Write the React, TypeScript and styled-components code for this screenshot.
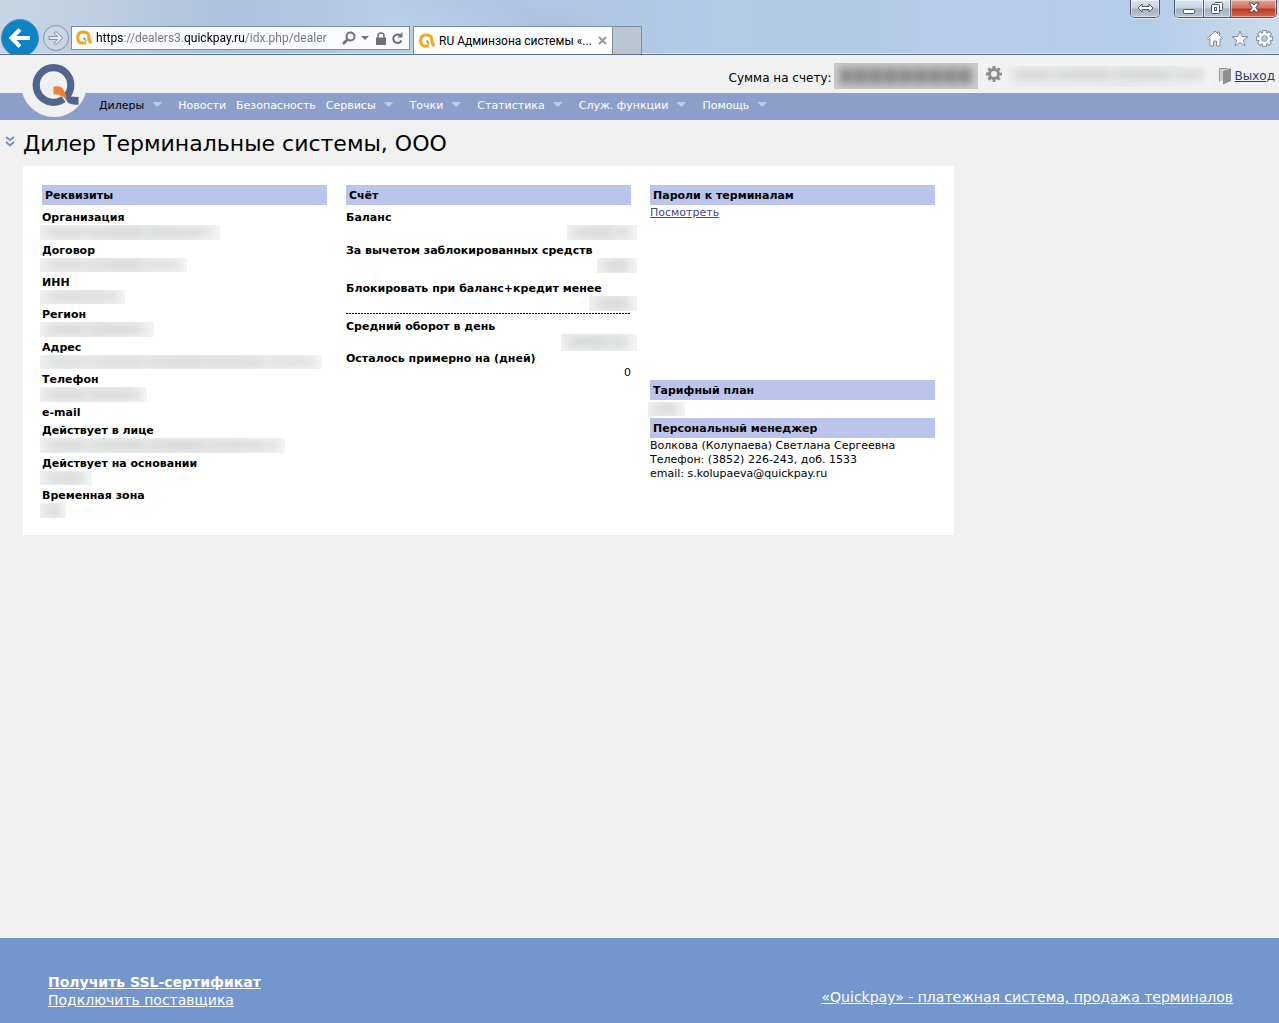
import React, { useState } from "react";
import styled, { createGlobalStyle } from "styled-components";

const ui = `Roboto, "Open Sans", sans-serif`;
const body = `Verdana, "DejaVu Sans", sans-serif`;

const GlobalStyle = createGlobalStyle`
  *, *::before, *::after { box-sizing: border-box; }
  body { margin: 0; background: #f1f1f1; font-family: ${body}; color: #000; }
  button, input { font: inherit; }
`;

const Page = styled.div`
  min-height: 100vh;
  display: flex;
  flex-direction: column;
`;

/* ---------- browser frame ---------- */

const Chrome = styled.header`
  display: flex;
  align-items: flex-end;
  height: 55px;
  flex: none;
  overflow: hidden;
  border-bottom: 1px solid #5c7088;
  box-shadow: inset 0 -1px 0 #d9e5f1;
  font-family: ${ui};
  background:
    linear-gradient(205deg, rgba(190, 207, 232, 0) 52%, rgba(165, 187, 220, 0.5) 56%, rgba(190, 207, 232, 0) 66%),
    linear-gradient(90deg, #c6d5e4 0, #bdcee1 8%, #abc1dc 18%, #b9cfe7 31%, #b7cfe9 38%, #afc5e1 44%, #b1cce6 56%, #b2cbe5 68%, #b7cce9 74%, #b4cde9 90%, #cbdcec 100%);
`;

const NavButtons = styled.div`
  display: flex;
  align-items: center;
  gap: 4px;
  height: 32px;
  margin-left: 1px;
`;

const RoundButton = styled.button<{ $size: number; $main?: boolean }>`
  display: grid;
  place-items: center;
  flex: none;
  width: ${(p) => p.$size}px;
  height: ${(p) => p.$size}px;
  padding: 0;
  border-radius: 50%;
  border: ${(p) => (p.$main ? "1px solid #5f87a8" : "1px solid #8296ad")};
  background: ${(p) => (p.$main ? "#0a84c6" : "rgba(255, 255, 255, 0.12)")};
`;

const AddressBar = styled.form`
  display: flex;
  align-items: center;
  width: 339px;
  height: 24px;
  margin: 0 3px 4px 2px;
  padding: 0 4px;
  border: 1px solid #7a8ea5;
  background: #f9fbfe;
`;

/* The scheme and the domain are dark, the rest of the address is grey. */
const AddressInput = styled.input`
  flex: 1;
  min-width: 0;
  margin-left: 4px;
  padding: 0;
  border: 0;
  outline: 0;
  font-size: 12px;
  line-height: 20px;
  color: transparent;
  caret-color: #000;
  background: linear-gradient(90deg, #000 0 28px, #757575 28px 88px, #000 88px 148px, #757575 148px);
  -webkit-background-clip: text;
  background-clip: text;
`;

const ToolButton = styled.button<{ $width: number }>`
  display: grid;
  place-items: center;
  flex: none;
  width: ${(p) => p.$width}px;
  height: 20px;
  padding: 0;
  border: 0;
  background: none;
`;

const Tab = styled.div`
  display: flex;
  align-items: center;
  width: 200px;
  height: 28px;
  padding: 0 4px 0 5px;
  border: 1px solid #7a8ea5;
  border-bottom: 0;
  background: #fff;
  font-size: 12px;
`;

const TabTitle = styled.span`
  flex: 1;
  margin-left: 4px;
  white-space: nowrap;
  overflow: hidden;
`;

const NewTab = styled.button`
  width: 30px;
  height: 28px;
  margin-left: -1px;
  padding: 0;
  border: 1px solid #7a8ea5;
  border-bottom: 0;
  background: #bac5d0;
`;

const WindowSide = styled.div`
  display: flex;
  flex-direction: column;
  align-items: flex-end;
  justify-content: space-between;
  align-self: stretch;
  margin-left: auto;
  padding: 0 2px 6px 0;
`;

const WindowRow = styled.div`
  display: flex;
  gap: 14px;
`;

const WindowGroup = styled.div`
  display: flex;
  height: 18px;
  border: 1px solid #4b5766;
  border-top: 0;
  border-radius: 0 0 5px 5px;
  overflow: hidden;
  box-shadow: 0 1px 0 rgba(255, 255, 255, 0.6);
`;

const WindowButton = styled.button<{ $width: number; $close?: boolean }>`
  display: grid;
  place-items: center;
  width: ${(p) => p.$width}px;
  padding: 0 0 2px;
  border: 0;
  box-shadow: inset 0 0 0 1px rgba(255, 255, 255, 0.45);
  background: ${(p) =>
    p.$close
      ? "linear-gradient(#e0a497 0, #d0705c 48%, #b93a20 52%, #d3694a 100%)"
      : "linear-gradient(#dbe5ef 0, #c5d1de 48%, #a3b1c2 52%, #b8c8d9 100%)"};
  & + & { border-left: 1px solid #5b6776; }
`;

const CommandRow = styled.div`
  display: flex;
  gap: 4px;
  padding-right: 3px;
`;

/* ---------- site header ---------- */

const SiteHeader = styled.div`
  position: relative;
`;

const LogoLink = styled.a`
  position: absolute;
  left: 20px;
  top: 0;
  svg { display: block; }
`;

const AccountBar = styled.div`
  display: flex;
  align-items: center;
  justify-content: flex-end;
  height: 38px;
  padding: 4px 4px 0 0;
`;

const AccountLabel = styled.span`
  margin: 4px 2px 0 0;
  font-size: 12px;
`;

const IconButton = styled.button`
  display: grid;
  place-items: center;
  width: 18px;
  height: 18px;
  margin: 0 4px 4px 7px;
  padding: 0;
  border: 0;
  background: none;
`;

const ExitLink = styled.a`
  display: flex;
  align-items: center;
  gap: 3px;
  margin-left: 8px;
  color: #2f3f74;
  font-size: 12px;
`;

const Menu = styled.nav`
  display: flex;
  align-items: center;
  gap: 10px;
  height: 27px;
  padding: 0 8px 2px 99px;
  background: #8c9fcb;
  font-size: 11px;
`;

const MenuLink = styled.a<{ $active?: boolean }>`
  display: flex;
  align-items: center;
  gap: 8px;
  color: ${(p) => (p.$active ? "#000" : "#fff")};
  text-decoration: none;
  white-space: nowrap;
`;

const Arrow = styled.span`
  width: 10px;
  height: 5px;
  margin: 0 6px 2px 0;
  background: #bfcbe6;
  clip-path: polygon(0 0, 100% 0, 50% 100%);
`;

/* ---------- dealer card ---------- */

const Main = styled.main`
  flex: 1;
  padding: 9px 23px 24px 5px;
`;

const TitleRow = styled.div`
  display: flex;
  align-items: center;
  gap: 8px;
  height: 30px;
`;

const FoldButton = styled.button`
  display: grid;
  width: 10px;
  height: 16px;
  margin-bottom: 4px;
  padding: 0;
  border: 0;
  background: none;
  place-items: center;
`;

const Title = styled.h1`
  margin: 0;
  font-size: 22px;
  line-height: 30px;
  font-weight: 400;
  white-space: nowrap;
`;

const Card = styled.section`
  display: grid;
  grid-template-columns: repeat(3, minmax(0, 1fr));
  gap: 19px;
  max-width: 931px;
  margin: 7px 0 0 18px;
  padding: 19px 19px 14px;
  background: #fff;
  font-size: 11px;
  line-height: 14px;
`;

const Heading = styled.h2`
  margin: 0;
  padding: 2px 3px 0;
  height: 20px;
  background: #bbc5ec;
  font-size: 11px;
  line-height: 18px;
`;

const Fields = styled.dl`
  margin: 5px 0 0;
`;

const Term = styled.dt`
  font-weight: 700;
  line-height: 15px;
  white-space: nowrap;
`;

const Value = styled.dd<{ $height: number; $end?: boolean; $after?: number }>`
  display: flex;
  justify-content: ${(p) => (p.$end ? "flex-end" : "flex-start")};
  height: ${(p) => p.$height}px;
  margin: 0 ${(p) => (p.$end ? -6 : 0)}px ${(p) => p.$after ?? 3}px ${(p) => (p.$end ? 0 : -2)}px;
`;

const Total = styled.dd`
  margin: 0;
  text-align: right;
`;

const Rule = styled.hr`
  margin: 0 0 5px;
  border: 0;
  height: 1px;
  background: repeating-linear-gradient(90deg, #000 0 2px, transparent 2px 3px);
`;

const Terminals = styled.div`
  min-height: 195px;
`;

const CardText = styled.p`
  margin: 0;
  padding-top: 1px;
`;

const CardLink = styled.a`
  color: #44488c;
`;

const Plan = styled.div`
  height: 18px;
  padding-top: 2px;
  margin-left: -2px;
`;

/* Hidden private value: a clipped plate with a smeared stripe inside. */
const Redacted = styled.span<{ $width: number; $height: number; $strong?: boolean }>`
  display: block;
  flex: none;
  width: ${(p) => p.$width}px;
  height: ${(p) => p.$height}px;
  overflow: hidden;
  background: ${(p) => (p.$strong ? "#cbcccc" : "linear-gradient(90deg, #eeefef, #e8e9e9 60%, #f3f4f4)")};
  &::before {
    content: "";
    display: block;
    height: ${(p) => (p.$strong ? 60 : 46)}%;
    margin: ${(p) => (p.$strong ? "5px 6px" : "4px 8px")};
    background: ${(p) =>
      p.$strong
        ? "repeating-linear-gradient(90deg, #858585 0 11px, #a8a8a8 11px 15px)"
        : "repeating-linear-gradient(90deg, #d3d5d5 0 34px, #dfe1e1 34px 42px, #d6d8d8 42px 60px)"};
    filter: blur(4px);
  }
`;

/* ---------- footer ---------- */

const Footer = styled.footer`
  display: flex;
  flex-wrap: wrap;
  justify-content: space-between;
  align-items: flex-end;
  gap: 12px;
  min-height: 85px;
  padding: 35px 46px 14px 48px;
  background: #7496ce;
  font-size: 14px;
  line-height: 18px;
`;

const FooterLinks = styled.div`
  display: flex;
  flex-direction: column;
  align-items: flex-start;
`;

const FooterLink = styled.a<{ $bold?: boolean }>`
  color: #fff;
  font-weight: ${(p) => (p.$bold ? 700 : 400)};
`;

const Promo = styled.div`
  padding-bottom: 3px;
`;

/* ---------- drawings ---------- */

const QIcon = () => (
  <svg width="16" height="16" viewBox="0 0 16 16" aria-hidden="true">
    <path d="M10 13H5.200Q1.700 12.300 1.700 7.200T7.300 1.900 12.800 7.200q0 4 2.700 5.600" fill="none" stroke="#f2a71b" strokeWidth="3" />
    <path d="M7 7.500h2l2 4q-3.500-.5-4-4z" fill="#8fb052" />
  </svg>
);

type GearProps = { size: number; fill: string; stroke?: string; hole: string };
const GearShape = ({ size, fill, stroke, hole }: GearProps) => {
  const teeth = (width: number, grow: number, color: string) =>
    [0, 45, 90, 135].map((a) => (
      <rect key={a} x={9 - width / 2} y={1 - grow} width={width} height={16 + 2 * grow} fill={color} transform={`rotate(${a} 9 9)`} />
    ));
  return (
    <svg width={size} height={size} viewBox="0 0 18 18" aria-hidden="true">
      {stroke && <g>{teeth(5, 1, stroke)}<circle cx="9" cy="9" r="7" fill={stroke} /></g>}
      {teeth(3, 0, fill)}
      <circle cx="9" cy="9" r="6" fill={fill} />
      <circle cx="9" cy="9" r="3" fill={hole} stroke={stroke} />
    </svg>
  );
};

const Logo = () => (
  <svg width="68" height="63" viewBox="0 5 68 63" aria-hidden="true">
    <circle cx="34" cy="34" r="33" fill="#f1f1f1" />
    <circle cx="33.500" cy="35" r="17.300" fill="none" stroke="#52658f" strokeWidth="7.200" />
    <path d="M45 42l6 4.500 7.500.5v7.500c-7 .8-11-1-14-5z" fill="#52658f" />
    <path d="M41 44l6.500 9.500" stroke="#f1f1f1" strokeWidth="1.500" />
    <path d="M33.500 36.500c9-1.500 11 2 13.500 13.500-3-3-9-7-13.500-5.500z" fill="#f08038" />
  </svg>
);

type Item = { text: string; sub?: boolean; active?: boolean };
const menu: Item[] = [
  { text: "Дилеры", sub: true, active: true },
  { text: "Новости" },
  { text: "Безопасность" },
  { text: "Сервисы", sub: true },
  { text: "Точки", sub: true },
  { text: "Статистика", sub: true },
  { text: "Служ. функции", sub: true },
  { text: "Помощь", sub: true },
];

type Detail = { term: string; width?: number; height?: number };
const details: Detail[] = [
  { term: "Организация", width: 180, height: 15 },
  { term: "Договор", width: 147, height: 14 },
  { term: "ИНН", width: 85, height: 14 },
  { term: "Регион", width: 114, height: 15 },
  { term: "Адрес", width: 282, height: 14 },
  { term: "Телефон", width: 107, height: 15 },
  { term: "e-mail" },
  { term: "Действует в лице", width: 245, height: 15 },
  { term: "Действует на основании", width: 52, height: 14 },
  { term: "Временная зона", width: 26, height: 15 },
];

export default function App() {
  const [url, setUrl] = useState("https://dealers3.quickpay.ru/idx.php/dealer");
  return (
    <Page>
      <GlobalStyle />
      <Chrome>
        <NavButtons>
          <RoundButton $size={38} $main aria-label="Назад">
            <svg width="24" height="22" viewBox="0 0 24 22" fill="none" stroke="#fff" strokeWidth="4">
              <path d="M22 11H4M12 2.500L3.500 11l8.500 8.500" />
            </svg>
          </RoundButton>
          <RoundButton $size={26} aria-label="Вперёд">
            <svg width="18" height="16" viewBox="0 0 18 16" fill="#e3ebf4" stroke="#8092a8">
              <path d="M2 6.500h8.500L7 3l2-1.500L16 8l-7 6.500L7 13l3.500-3.500H2z" />
            </svg>
          </RoundButton>
        </NavButtons>
        <AddressBar onSubmit={(e) => e.preventDefault()}>
          <QIcon />
          <AddressInput aria-label="Адрес" value={url} onChange={(e) => setUrl(e.target.value)} />
          <ToolButton $width={18} type="button" aria-label="Поиск">
            <svg width="14" height="14" viewBox="0 0 14 14" fill="none" stroke="#707070" strokeWidth="2">
              <circle cx="8.500" cy="5.500" r="4" />
              <path d="M5.500 8.500L1 13" strokeWidth="2.500" />
            </svg>
          </ToolButton>
          <ToolButton $width={14} type="button" aria-label="Показать список">
            <svg width="8" height="4" viewBox="0 0 8 4"><path d="M0 0h8L4 4z" fill="#707070" /></svg>
          </ToolButton>
          <ToolButton $width={18} type="button" aria-label="Сведения о безопасности">
            <svg width="12" height="13" viewBox="0 0 12 13">
              <rect x="1" y="5.500" width="10" height="7.500" fill="#707070" />
              <path d="M3 6V4a3 3 0 0 1 6 0v2" fill="none" stroke="#707070" strokeWidth="1.500" />
            </svg>
          </ToolButton>
          <ToolButton $width={15} type="button" aria-label="Обновить">
            <svg width="13" height="13" viewBox="0 0 13 13">
              <path d="M10.500 8.500A4.300 4.300 0 1 1 9.500 3.500" fill="none" stroke="#707070" strokeWidth="2" />
              <path d="M11.500 0v5.500H6.500z" fill="#707070" />
            </svg>
          </ToolButton>
        </AddressBar>
        <Tab>
          <QIcon />
          <TabTitle>RU Админзона системы «...</TabTitle>
          <ToolButton $width={12} aria-label="Закрыть вкладку">
            <svg width="9" height="9" viewBox="0 0 9 9" stroke="#9a9a9a" strokeWidth="2"><path d="M1 1l7 7M8 1L1 8" /></svg>
          </ToolButton>
        </Tab>
        <NewTab aria-label="Новая вкладка" />
        <WindowSide>
          <WindowRow>
            <WindowGroup>
              <WindowButton $width={28} aria-label="Изменить размер">
                <svg width="17" height="10" viewBox="0 0 17 10" fill="#fff" stroke="#4b5766">
                  <path d="M1 5l4-4v2.500h7V1l4 4-4 4V6.500H5V9z" />
                </svg>
              </WindowButton>
            </WindowGroup>
            <WindowGroup>
              <WindowButton $width={28} aria-label="Свернуть">
                <svg width="12" height="14" viewBox="0 0 12 14"><rect x=".5" y="8.500" width="11" height="4" rx="1" fill="#fff" stroke="#4b5766" /></svg>
              </WindowButton>
              <WindowButton $width={27} aria-label="Восстановить">
                <svg width="13" height="12" viewBox="0 0 13 12" fill="#fff" stroke="#4b5766">
                  <rect x="3.500" y=".5" width="8" height="8" rx="1" />
                  <rect x=".5" y="2.500" width="8" height="9" rx="1" />
                  <rect x="3.500" y="5.500" width="2" height="3" />
                </svg>
              </WindowButton>
              <WindowButton $width={46} $close aria-label="Закрыть">
                <svg width="12" height="11" viewBox="0 0 12 11" fill="#fff" stroke="#55404a">
                  <path d="M1 1h3.500L6 3l1.500-2H11L8 5.500l3 4.500H7.500L6 8l-1.500 2H1l3-4.500z" />
                </svg>
              </WindowButton>
            </WindowGroup>
          </WindowRow>
          <CommandRow>
            <ToolButton $width={20} aria-label="Домой">
              <svg width="18" height="17" viewBox="0 0 18 17" fill="#fff" stroke="#7d8fa6">
                <path d="M9 1L1.500 8.500l1 1L4 8.500V16h3.500v-5h3v5H14V8.500l1.500 1 1-1L13.500 5.500V2h-2v1.500z" />
              </svg>
            </ToolButton>
            <ToolButton $width={21} aria-label="Избранное">
              <svg width="18" height="17" viewBox="0 0 18 17" fill="#fff" stroke="#7d8fa6">
                <path d="M9 1l2 5.500h6l-4.700 3.600L14 16l-5-3.500L4 16l1.700-5.900L1 6.500h6z" />
              </svg>
            </ToolButton>
            <ToolButton $width={20} aria-label="Сервис">
              <GearShape size={17} fill="#fff" stroke="#7d8fa6" hole="#b9cfe6" />
            </ToolButton>
          </CommandRow>
        </WindowSide>
      </Chrome>

      <SiteHeader>
        <AccountBar>
          <AccountLabel>Сумма на счету:</AccountLabel>
          <Redacted $width={144} $height={26} $strong />
          <IconButton aria-label="Настройки">
            <GearShape size={18} fill="#8f8f8f" hole="#f1f1f1" />
          </IconButton>
          <Redacted $width={204} $height={21} />
          <ExitLink href="#exit">
            <svg width="13" height="18" viewBox="0 0 13 18" aria-hidden="true">
              <path d="M.5 14.500v-13h8" fill="none" stroke="#999" />
              <path d="M1 2h8L4 4v10H1z" fill="#d0d0d0" />
              <path d="M4 4l8-3v13l-8 3.500z" fill="#8f8f8f" />
            </svg>
            Выход
          </ExitLink>
        </AccountBar>
        <Menu>
          {menu.map((m) => (
            <MenuLink key={m.text} href="#menu" $active={m.active}>
              {m.text}
              {m.sub && <Arrow />}
            </MenuLink>
          ))}
        </Menu>
        <LogoLink href="#home" aria-label="Quickpay"><Logo /></LogoLink>
      </SiteHeader>

      <Main>
        <TitleRow>
          <FoldButton aria-label="Развернуть">
            <svg width="10" height="12" viewBox="0 0 10 12" fill="none" stroke="#7391c4" strokeWidth="2">
              <path d="M1 1l4 3 4-3M1 6l4 3.500L9 6" />
            </svg>
          </FoldButton>
          <Title>Дилер Терминальные системы, ООО</Title>
        </TitleRow>
        <Card>
          <div>
            <Heading>Реквизиты</Heading>
            <Fields>
              {details.map((d) => (
                <React.Fragment key={d.term}>
                  <Term>{d.term}</Term>
                  <Value $height={d.height ?? 0}>
                    {d.width && <Redacted $width={d.width} $height={d.height ?? 15} />}
                  </Value>
                </React.Fragment>
              ))}
            </Fields>
          </div>
          <div>
            <Heading>Счёт</Heading>
            <Fields>
              <Term>Баланс</Term>
              <Value $height={15} $end><Redacted $width={70} $height={15} /></Value>
              <Term>За вычетом заблокированных средств</Term>
              <Value $height={15} $end $after={8}><Redacted $width={40} $height={15} /></Value>
              <Term>Блокировать при баланс+кредит менее</Term>
              <Value $height={15} $end $after={2}><Redacted $width={48} $height={15} /></Value>
            </Fields>
            <Rule />
            <Fields>
              <Term>Средний оборот в день</Term>
              <Value $height={15} $end $after={2}><Redacted $width={76} $height={17} /></Value>
              <Term>Осталось примерно на (дней)</Term>
              <Total>0</Total>
            </Fields>
          </div>
          <div>
            <Terminals>
              <Heading>Пароли к терминалам</Heading>
              <CardText><CardLink href="#passwords">Посмотреть</CardLink></CardText>
            </Terminals>
            <Heading>Тарифный план</Heading>
            <Plan><Redacted $width={37} $height={14} /></Plan>
            <Heading>Персональный менеджер</Heading>
            <CardText>
              Волкова (Колупаева) Светлана Сергеевна
              <br />
              Телефон: (3852) 226-243, доб. 1533
              <br />
              email: s.kolupaeva@quickpay.ru
            </CardText>
          </div>
        </Card>
      </Main>

      <Footer>
        <FooterLinks>
          <FooterLink href="#ssl" $bold>Получить SSL-сертификат</FooterLink>
          <FooterLink href="#supplier">Подключить поставщика</FooterLink>
        </FooterLinks>
        <Promo>
          <FooterLink href="#quickpay">«Quickpay» - платежная система, продажа терминалов</FooterLink>
        </Promo>
      </Footer>
    </Page>
  );
}
